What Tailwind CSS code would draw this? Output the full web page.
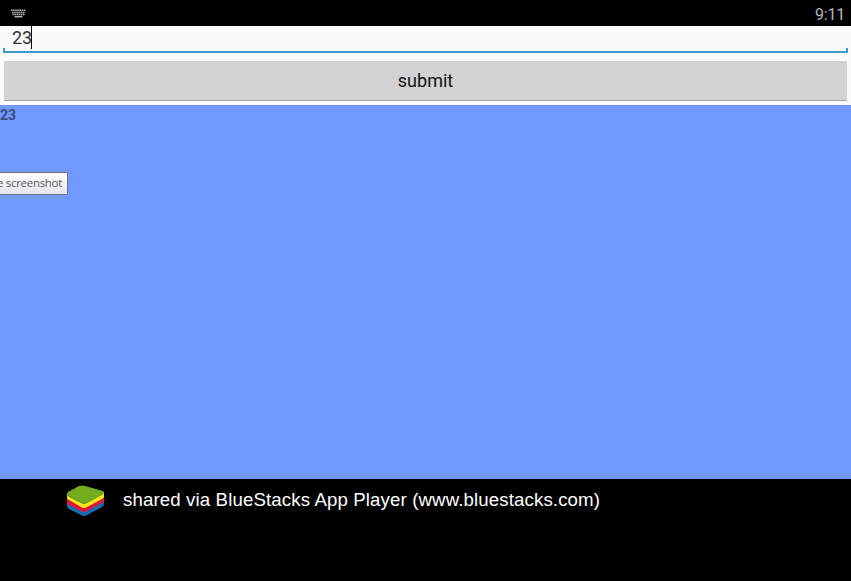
<!DOCTYPE html>
<html lang="en">
<head>
<meta charset="utf-8">
<title>submit</title>
<script src="https://cdn.jsdelivr.net/npm/@tailwindcss/browser@4"></script>
</head>
<body class="w-[851px] h-[581px] overflow-hidden bg-black flex flex-col font-['Roboto',sans-serif]">
<header class="h-[26px] shrink-0 flex justify-between items-center pl-[11px] pr-[6px]">
  <svg class="w-[15px] h-[9px]" viewBox="0 0 15 9" fill="none" stroke="#b5b5b5" stroke-width="1.5">
    <path d="M0 1.2h15" stroke-dasharray="1.6 .5"/>
    <path d="M1 3.4h13" stroke-dasharray="1.6 .5"/>
    <path d="M1.5 5.5h12" stroke-dasharray="1.6 .5"/>
    <path d="M3.5 7.7h8"/>
  </svg>
  <span class="pt-[3px] text-[16px] leading-[24px] tracking-[-0.2px] text-[#b5b5b5]">9:11</span>
</header>
<main class="h-[453px] shrink-0 flex flex-col bg-[#fbfbfb]">
  <div class="h-[27px] mx-[3px] shrink-0 flex flex-col justify-end">
    <div class="h-[23px] flex pl-[9px] -mb-px">
      <span class="w-[19px] text-[18px] leading-[23px] tracking-[-0.2px] text-[#303030]">23</span><i class="w-px h-[23px] bg-black"></i>
    </div>
    <div class="h-[5px] shrink-0 border-x-2 border-b-2 border-[#3a9bcb]"></div>
  </div>
  <button class="mt-[8px] mx-[4px] h-[40px] shrink-0 bg-[#d3d3d3] border-b border-[#a9a4a4] rounded-[1px] text-[18px] leading-[39px] text-[#111]">submit</button>
  <section class="mt-[4px] grow bg-[#7199ff]">
    <p class="pt-[2px] text-[14px] leading-[16px] font-bold text-[#384c80]">23</p>
    <div class="mt-[49px] w-[68px] h-[23px] overflow-hidden flex justify-end border border-l-0 border-[#747478] rounded-r-[2px] bg-linear-to-b from-white to-[#e5e5f0] pr-[5px]">
      <span class="whitespace-nowrap font-['Open_Sans',sans-serif] text-[11.5px] leading-[20px] tracking-[-0.3px] text-[#575757]">e screenshot</span>
    </div>
  </section>
</main>
<footer class="grow flex items-start pl-[66px]">
  <svg class="w-[39px] h-[33px] mt-[5px]" viewBox="0 0 39 33">
    <path d="M1 18v4q0 2 2 3l12 6q3 2 6 0l15-8q2-1 2-3v-5z" fill="#176db0"/>
    <path d="M1 14v5q0 1 2 2l12 6q3 2 6 0l15-8q2-1 2-2v-5z" fill="#dc1738"/>
    <path d="M1 11v3q0 1 2 2l12 7q3 2 6 0l15-8q2-1 2-2v-4z" fill="#ffe51b"/>
    <path d="M1 10v1q0 1 2 2l12 6q3 2 6 0l15-8q2-1 2-3z" fill="#5a9c1b"/>
    <path d="M2 8L13 2q3-1 6 0l18 5q2 1 0 3l-16 8q-3 2-6 0L2 11q-2-1 0-3z" fill="#75ad20"/>
  </svg>
  <span class="ml-[18px] mt-[10px] whitespace-nowrap font-['Liberation_Sans',sans-serif] text-[18.67px] leading-[22px] tracking-[0.12px] text-white">shared via BlueStacks App Player (www.bluestacks.com)</span>
</footer>
</body>
</html>
